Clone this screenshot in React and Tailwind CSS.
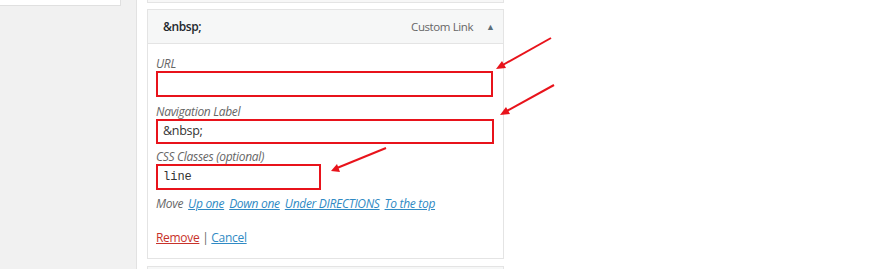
export default function App() {
  const font = { fontFamily: '"Open Sans", "Noto Sans", sans-serif' }
  return (
    <div className="relative w-[880px] h-[269px] overflow-hidden flex bg-white text-[#444]" style={font}>
      {/* left sidebar */}
      <div className="w-[137px] shrink-0 bg-[#f1f1f1] border-r border-[#e2e2e2]">
        <div className="w-[121px] h-[6px] bg-white border-r border-b border-[#e0e0e0]" />
      </div>

      {/* menu items */}
      <div className="flex-1 pl-[10px]">
        <div className="w-[357px] h-[3px] border-x border-b border-[#e4e4e4] bg-[#f7f7f7]" />

        <div className="mt-[6px] w-[357px] border border-[#e4e4e4] bg-white">
          <div className="h-[34px] flex items-center pl-[15px] pr-[8px] bg-[#f6f7f7] border-b border-[#e4e4e4]">
            <span className="text-[12px] font-semibold text-[#23282d] tracking-[-0.4px]">&amp;nbsp;</span>
            <span className="ml-auto text-[11.5px] text-[#666] tracking-[-0.4px]">Custom Link</span>
            <span className="ml-[13px] text-[9px] text-[#5b6e7a]">▲</span>
          </div>

          <div className="pt-[12px] pl-[8px] pb-[13px]">
            <div className="text-[12px] italic text-[#666] leading-[15px] tracking-[-0.3px]">URL</div>
            <div className="w-[337px] h-[26px] border-2 border-[#e8131b]" />

            <div className="mt-[7px] text-[12px] italic text-[#666] leading-[15px] tracking-[-0.3px]">Navigation Label</div>
            <div className="w-[338px] h-[25px] border-2 border-[#e8131b] flex items-center pl-[5px] text-[12.5px] text-[#333] tracking-[-0.3px]">&amp;nbsp;</div>

            <div className="mt-[5px] text-[12px] italic text-[#666] leading-[15px] tracking-[-0.3px]">CSS Classes (optional)</div>
            <div className="w-[165px] h-[26px] border-2 border-[#e8131b] flex items-center pl-[5px] text-[12px] text-[#333]" style={{ fontFamily: '"Liberation Mono", "DejaVu Sans Mono", monospace' }}>line</div>

            <div className="mt-[6px] flex gap-[5px] text-[12px] italic leading-[15px] tracking-[-0.3px]">
              <span className="text-[#666]">Move</span>
              <span className="text-[#2f8ac4] underline">Up one</span>
              <span className="text-[#2f8ac4] underline">Down one</span>
              <span className="text-[#2f8ac4] underline">Under DIRECTIONS</span>
              <span className="text-[#2f8ac4] underline">To the top</span>
            </div>

            <div className="mt-[19px] text-[12px] leading-[15px] tracking-[-0.3px]">
              <span className="text-[#c8322a] underline">Remove</span>
              <span className="text-[#666]"> | </span>
              <span className="text-[#2f8ac4] underline">Cancel</span>
            </div>
          </div>
        </div>

        <div className="mt-[7px] w-[357px] h-[10px] border border-[#e4e4e4] bg-[#f6f7f7]" />
      </div>

      {/* annotation arrows */}
      <svg className="absolute inset-0 pointer-events-none" width="880" height="269">
        <g stroke="#e8131b" strokeWidth="2" fill="#e8131b">
          <line x1="551" y1="38" x2="501" y2="66" />
          <polygon points="496,69 502,61 506,68" stroke="none" />
          <line x1="554" y1="85" x2="505" y2="112" />
          <polygon points="500,115 506,107 510,114" stroke="none" />
          <line x1="386" y1="148" x2="337" y2="168" />
          <polygon points="331,171 337,164 340,172" stroke="none" />
        </g>
      </svg>
    </div>
  )
}
